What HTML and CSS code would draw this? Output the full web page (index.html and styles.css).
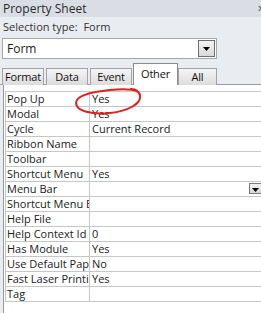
FILE: index.html
```html
<!DOCTYPE html>
<html lang="en">
<head>
  <meta charset="UTF-8">
  <title>Property Sheet</title>
  <link rel="stylesheet" href="styles.css">
</head>
<body>
  <div class="title-bar">
    <span>Property Sheet</span>
    <span class="close">&#215;</span>
  </div>
  <div class="selection">Selection type: <span class="sel-value">Form</span></div>

  <div class="combo">
    <span>Form</span>
    <span class="drop-btn">
      <svg width="8" height="4" viewBox="0 0 8 4"><path d="M0 0H7L3.5 4Z" fill="#000"/></svg>
    </span>
  </div>

  <div class="tabs">
    <div class="tab tab-format">Format</div>
    <div class="tab tab-data">Data</div>
    <div class="tab tab-event">Event</div>
    <div class="tab tab-other active">Other</div>
    <div class="tab tab-all">All</div>
  </div>

  <div class="sheet">
    <div class="grid">
      <div class="label">Pop Up</div><div class="value">Yes</div>
      <div class="label">Modal</div><div class="value">Yes</div>
      <div class="label">Cycle</div><div class="value">Current Record</div>
      <div class="label">Ribbon Name</div><div class="value"></div>
      <div class="label">Toolbar</div><div class="value"></div>
      <div class="label">Shortcut Menu</div><div class="value">Yes</div>
      <div class="label">Menu Bar</div>
      <div class="value value-drop">
        <span class="cell-btn">
          <svg width="8" height="4" viewBox="0 0 8 4"><path d="M0 0H7L3.5 4Z" fill="#000"/></svg>
        </span>
      </div>
      <div class="label">Shortcut Menu Bar</div><div class="value"></div>
      <div class="label">Help File</div><div class="value"></div>
      <div class="label">Help Context Id</div><div class="value">0</div>
      <div class="label">Has Module</div><div class="value">Yes</div>
      <div class="label">Use Default Paper Size</div><div class="value">No</div>
      <div class="label">Fast Laser Printing</div><div class="value">Yes</div>
      <div class="label">Tag</div><div class="value"></div>
    </div>
  </div>

  <!-- red marker drawn around the Pop Up value -->
  <svg class="marker" width="261" height="313" viewBox="0 0 261 313">
    <path d="M140 95 C140 90 128 88 110 90 C90 92 76 96 76 103 C76 111 92 115 110 113 C128 111 141 104 140 96 C139 91 135 89 131 89"
          fill="none" stroke="#e4201c" stroke-width="2" stroke-linecap="round"/>
  </svg>
</body>
</html>
```

FILE: styles.css
```css
body {
  margin: 0;
  width: 261px;
  height: 313px;
  overflow: hidden;
  background-color: #e9ecf1;
  font-family: "Open Sans", Arial, sans-serif;
  color: #1a1a1a;
  position: relative;
}
.title-bar {
  height: 17px;
  line-height: 17px;
  background-color: #dadee4;
  padding-left: 3px;
  font-size: 12px;
  color: #2a2a2a;
  display: flex;
  justify-content: space-between;
}
.close {
  margin-right: -4px;
  font-size: 13px;
  color: #444;
}
.selection {
  height: 16px;
  line-height: 16px;
  padding: 2px 3px 0;
  font-size: 11px;
  color: #333;
}
.sel-value {
  margin-left: 3px;
}
.combo {
  margin: 3px 0 0 2px;
  width: 209px;
  height: 19px;
  border: 1px solid #a6a6a6;
  background-color: #fff;
  display: flex;
  align-items: center;
  justify-content: space-between;
  padding-left: 4px;
  font-size: 12px;
}
.drop-btn {
  width: 15px;
  height: 15px;
  margin-right: 1px;
  border: 1px solid #6e6e6e;
  background: linear-gradient(#f4f4f4, #d9d9d9);
  display: flex;
  align-items: center;
  justify-content: center;
}
.tabs {
  margin-top: 4px;
  height: 21px;
  display: flex;
  align-items: flex-end;
  padding-left: 2px;
  border-bottom: 1px solid #9c9c9c;
}
.tab {
  height: 16px;
  line-height: 16px;
  margin-right: 2px;
  margin-bottom: -1px;
  border: 1px solid #a3a3a3;
  border-bottom: none;
  background: linear-gradient(#f5f5f5, #dcdcdc);
  font-size: 11px;
  letter-spacing: -0.2px;
  text-align: center;
  color: #111;
}
.tab-format { width: 40px; }
.tab-data { width: 40px; }
.tab-event { width: 40px; margin-right: 1px; }
.tab-other { width: 43px; margin-right: 0; }
.tab-all { width: 37px; }
.tab.active {
  height: 21px;
  line-height: 19px;
  background: #fff;
  border-color: #8c8c8c;
}
.sheet {
  margin-left: 3px;
  height: 229px;
  padding: 6px 0 0 1px;
  background-color: #fff;
  border-left: 1px solid #9a9a9a;
}
.grid {
  display: grid;
  grid-template-columns: 85px 1fr;
  border-top: 1px solid #c6c6c6;
  font-size: 11px;
}
.label,
.value {
  height: 14px;
  line-height: 14px;
  border-bottom: 1px solid #c6c6c6;
  white-space: nowrap;
  overflow: hidden;
}
.label {
  border-left: 1px solid #c6c6c6;
  border-right: 1px solid #c6c6c6;
  padding-left: 1px;
}
.value {
  padding-left: 2px;
}
.value-drop {
  display: flex;
  justify-content: flex-end;
  align-items: flex-start;
}
.cell-btn {
  width: 14px;
  height: 11px;
  margin-top: 1px;
  margin-right: -2px;
  border: 1px solid #7a7a7a;
  background: linear-gradient(#f2f2f2, #d6d6d6);
  display: flex;
  align-items: flex-end;
  justify-content: center;
  padding-bottom: 1px;
  box-sizing: border-box;
}
.marker {
  position: absolute;
  left: 0;
  top: 0;
  pointer-events: none;
}
```
